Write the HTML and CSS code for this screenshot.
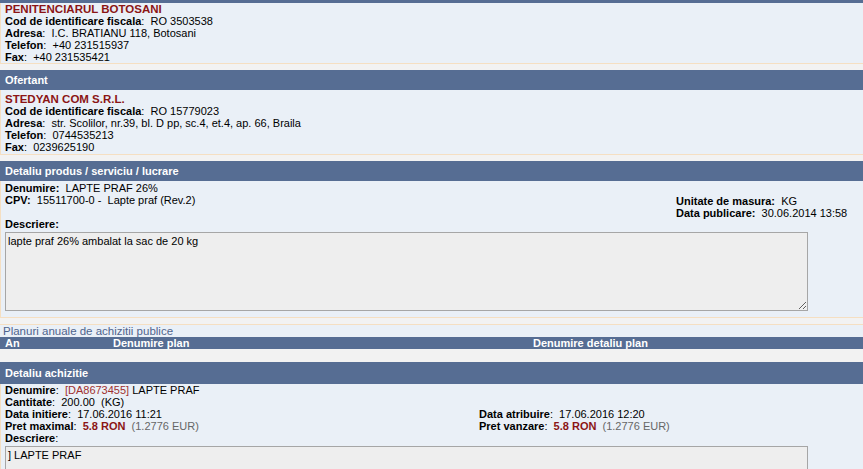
FILE: index.html
```html
<!DOCTYPE html>
<html>
<head>
<meta charset="utf-8">
<link rel="stylesheet" href="styles.css">
</head>
<body>
<div class="page">
  <div class="sec">
    <div class="hdr hdr-cut"></div>
    <div class="box">
      <div class="name">PENITENCIARUL BOTOSANI</div>
      <div><b>Cod de identificare fiscala</b>:&nbsp; RO 3503538</div>
      <div><b>Adresa</b>:&nbsp; I.C. BRATIANU 118, Botosani</div>
      <div><b>Telefon</b>:&nbsp; +40 231515937</div>
      <div><b>Fax</b>:&nbsp; +40 231535421</div>
    </div>
  </div>

  <div class="sec">
    <div class="hdr">Ofertant</div>
    <div class="box box-of">
      <div class="name">STEDYAN COM S.R.L.</div>
      <div><b>Cod de identificare fiscala</b>:&nbsp; RO 15779023</div>
      <div><b>Adresa</b>:&nbsp; str. Scolilor, nr.39, bl. D pp, sc.4, et.4, ap. 66, Braila</div>
      <div><b>Telefon</b>:&nbsp; 0744535213</div>
      <div><b>Fax</b>:&nbsp; 0239625190</div>
    </div>
  </div>

  <div class="sec">
    <div class="hdr">Detaliu produs / serviciu / lucrare</div>
    <div class="box box-prod">
      <div class="prod-grid">
        <div class="prod-left">
          <div><b>Denumire:</b>&nbsp; LAPTE PRAF 26%</div>
          <div><b>CPV:</b>&nbsp; 15511700-0 -&nbsp; Lapte praf (Rev.2)</div>
        </div>
        <div class="prod-right">
          <div><b>Unitate de masura:</b>&nbsp; KG</div>
          <div><b>Data publicare:</b>&nbsp; 30.06.2014 13:58</div>
        </div>
      </div>
      <div><b>Descriere:</b></div>
      <textarea class="ta" readonly>lapte praf 26% ambalat la sac de 20 kg</textarea>
    </div>
  </div>

  <div class="plan">
    <div class="plan-title">Planuri anuale de achizitii publice</div>
    <div class="plan-head">
      <span>An</span>
      <span>Denumire plan</span>
      <span>Denumire detaliu plan</span>
    </div>
  </div>

  <div class="sec">
    <div class="hdr hdr-tall">Detaliu achizitie</div>
    <div class="box box-ach">
      <div class="ach-grid">
        <div><b>Denumire</b>:&nbsp; <span class="code">[DA8673455]</span> LAPTE PRAF</div>
        <div></div>
        <div><b>Cantitate</b>:&nbsp; 200.00&nbsp; (KG)</div>
        <div></div>
        <div><b>Data initiere</b>:&nbsp; 17.06.2016 11:21</div>
        <div><b>Data atribuire</b>:&nbsp; 17.06.2016 12:20</div>
        <div><b>Pret maximal</b>:&nbsp; <span class="price">5.8 RON</span>&nbsp; <span class="eur">(1.2776 EUR)</span></div>
        <div><b>Pret vanzare</b>:&nbsp; <span class="price">5.8 RON</span>&nbsp; <span class="eur">(1.2776 EUR)</span></div>
        <div><b>Descriere</b>:</div>
        <div></div>
      </div>
      <textarea class="ta" readonly>] LAPTE PRAF</textarea>
    </div>
  </div>
</div>
</body>
</html>
```

FILE: styles.css
```css
html, body {
  margin: 0;
  padding: 0;
  background: #f2f2f2;
}
body {
  font-family: "Liberation Sans", Arial, sans-serif;
  font-size: 11px;
  line-height: 12px;
  color: #000;
  overflow: hidden;
}
.page {
  width: 863px;
}
.sec {
  margin-bottom: 6px;
}
.hdr {
  background: #566d93;
  color: #fff;
  font-weight: bold;
  height: 20px;
  line-height: 20px;
  padding-left: 5px;
  font-size: 11px;
}
.hdr-cut {
  height: 3px;
}
.hdr-tall {
  height: 22px;
  line-height: 22px;
}
.box {
  background: #eaf0f7;
  border-left: 1px solid #f5dfc2;
  border-bottom: 1px solid #f5dfc2;
  padding: 0 0 0 4px;
}
.box-of {
  padding-top: 3px;
  padding-bottom: 1px;
}
.box-prod {
  padding-top: 1px;
  padding-bottom: 6px;
}
.name {
  color: #8b1515;
  font-weight: bold;
  font-size: 11.5px;
}
.prod-grid {
  display: grid;
  grid-template-columns: 671px 1fr;
  height: 36px;
}
.prod-right {
  padding-top: 13px;
}
.ta {
  display: block;
  box-sizing: border-box;
  width: 803px;
  height: 79px;
  margin: 2px 0 0 0;
  background: #eeeeee;
  border: 1px solid #a6a6a6;
  font-family: "Liberation Sans", Arial, sans-serif;
  font-size: 11px;
  line-height: 12px;
  padding: 2px;
  color: #000;
  resize: both;
}
.plan-title {
  background: #eaf0f7;
  border-top: 1px solid #f5dfc2;
  color: #4f648d;
  font-size: 11.5px;
  line-height: 12px;
  padding-left: 3px;
}
.plan-head {
  background: #566d93;
  color: #fff;
  font-weight: bold;
  height: 12px;
  line-height: 12px;
  display: grid;
  grid-template-columns: 108px 420px 1fr;
  padding-left: 5px;
  margin-bottom: 13px;
}
.ach-grid {
  display: grid;
  grid-template-columns: 474px 1fr;
}
.code {
  color: #a03030;
}
.price {
  color: #8b1515;
  font-weight: bold;
}
.eur {
  color: #666;
}
```
